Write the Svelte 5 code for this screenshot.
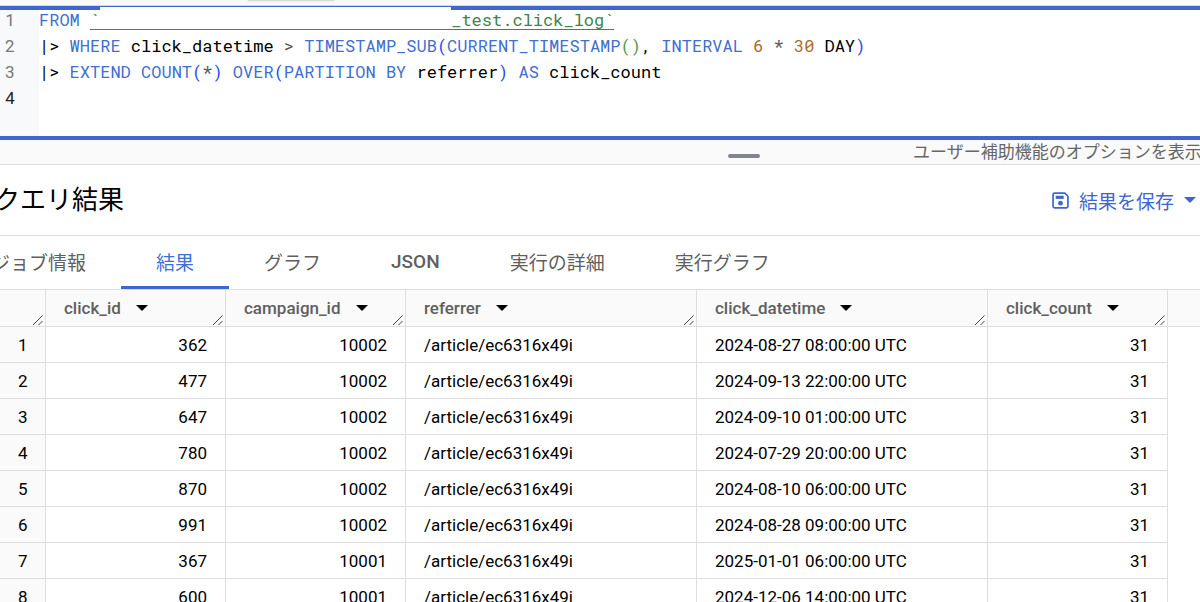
<script lang="ts">
	// Query editor with its results pane: SQL on top, tabs and the result grid below.
	type Token = { text: string; kind?: 'keyword' | 'paren' | 'inner' | 'number' | 'op' };

	const k = (text: string): Token => ({ text, kind: 'keyword' });
	const p = (text: string): Token => ({ text, kind: 'paren' });
	const n = (text: string): Token => ({ text, kind: 'number' });
	const o = (text: string): Token => ({ text, kind: 'op' });

	const filterLine: Token[] = [
		{ text: '|> ' },
		k('WHERE'),
		{ text: ' click_datetime ' },
		o('> '),
		k('TIMESTAMP_SUB'),
		p('('),
		k('CURRENT_TIMESTAMP'),
		{ text: '()', kind: 'inner' },
		{ text: ', ' },
		k('INTERVAL '),
		n('6'),
		o(' * '),
		n('30'),
		{ text: ' DAY' },
		p(')')
	];

	const extendLine: Token[] = [
		{ text: '|> ' },
		k('EXTEND COUNT'),
		p('('),
		o('*'),
		p(')'),
		k(' OVER'),
		p('('),
		k('PARTITION BY'),
		{ text: ' referrer' },
		p(')'),
		k(' AS'),
		{ text: ' click_count' }
	];

	const tabs = ['ジョブ情報', '結果', 'グラフ', 'JSON', '実行の詳細', '実行グラフ'];
	let active = $state('結果');

	const columns = ['click_id', 'campaign_id', 'referrer', 'click_datetime', 'click_count'];

	const referrer = '/article/ec6316x49i';
	const rows = [
		[362, 10002, referrer, '2024-08-27 08:00:00 UTC', 31],
		[477, 10002, referrer, '2024-09-13 22:00:00 UTC', 31],
		[647, 10002, referrer, '2024-09-10 01:00:00 UTC', 31],
		[780, 10002, referrer, '2024-07-29 20:00:00 UTC', 31],
		[870, 10002, referrer, '2024-08-10 06:00:00 UTC', 31],
		[991, 10002, referrer, '2024-08-28 09:00:00 UTC', 31],
		[367, 10001, referrer, '2025-01-01 06:00:00 UTC', 31],
		[600, 10001, referrer, '2024-12-06 14:00:00 UTC', 31]
	];
</script>

{#snippet grip()}
	<svg class="grip" viewBox="0 0 12 12" aria-hidden="true">
		<path d="M1 11 10.500 1.500M6.500 11 10.500 7" />
	</svg>
{/snippet}

{#snippet code(tokens: Token[])}
	{#each tokens as token}<span class={token.kind}>{token.text}</span>{/each}
{/snippet}

<div class="page">
	<div class="strip"><span class="strip-tab"></span></div>

	<section class="editor" aria-label="SQL">
		<div class="gutter">
			<div>1</div>
			<div>2</div>
			<div>3</div>
			<div class="current">4</div>
		</div>
		<div class="code">
			<div><span class="keyword">FROM</span> <span class="path">`<span class="masked"></span>_test.click_log`</span></div>
			<div>{@render code(filterLine)}</div>
			<div>{@render code(extendLine)}</div>
		</div>
	</section>

	<div class="splitter">
		<span class="handle"></span>
		<span class="hint">ユーザー補助機能のオプションを表示</span>
	</div>

	<header class="title-bar">
		<h1>クエリ結果</h1>
		<button class="save" type="button">
			<svg class="save-icon" viewBox="0 0 16 16" aria-hidden="true">
				<path d="M2.500 1H12L15 4V13.500Q15 15 13.500 15H2.500Q1 15 1 13.500V2.500Q1 1 2.500 1Z" fill="none" stroke="currentColor" stroke-width="1.600" />
				<path d="M3.500 3.500H11V6.500H3.500Z" fill="currentColor" />
				<circle cx="8" cy="10.500" r="2.300" fill="currentColor" />
			</svg>
			<span>結果を保存</span>
			<svg class="caret" viewBox="0 0 12 6" aria-hidden="true"><path d="M0 0H12L6 6Z" fill="currentColor" /></svg>
		</button>
	</header>

	<div class="tabs" role="tablist">
		{#each tabs as tab}
			<button
				type="button"
				role="tab"
				class:active={tab === active}
				class:latin={tab === 'JSON'}
				aria-selected={tab === active}
				onclick={() => (active = tab)}>{tab}</button
			>
		{/each}
	</div>

	<table>
		<colgroup>
			<col class="c-index" />
			<col class="c-narrow" />
			<col class="c-narrow" />
			<col class="c-wide" />
			<col class="c-wide" />
			<col class="c-narrow" />
			<col />
		</colgroup>
		<thead>
			<tr>
				<th>{@render grip()}</th>
				{#each columns as column}
					<th>
						<button class="sort" type="button">
							{column}
							<svg class="caret" viewBox="0 0 12 6" aria-hidden="true"><path d="M0 0H12L6 6Z" /></svg>
						</button>
						{@render grip()}
					</th>
				{/each}
				<th class="rest"></th>
			</tr>
		</thead>
		<tbody>
			{#each rows as row, i}
				<tr>
					<td class="index">{i + 1}</td>
					{#each row as cell}
						<td class:num={typeof cell === 'number'}>{cell}</td>
					{/each}
				</tr>
			{/each}
		</tbody>
	</table>
</div>

<style>
	:global(body) {
		background: #fff;
	}

	.page {
		height: 100vh;
		overflow: hidden;
		font-family: Roboto, 'Noto Sans CJK JP', sans-serif;
		font-size: 17px;
		color: #000;
	}

	button {
		padding: 0;
		border: 0;
		background: none;
		font: inherit;
		color: inherit;
		white-space: nowrap;
		cursor: pointer;
	}

	.strip {
		height: 5px;
		border-bottom: 1px solid #d5d8df;
		background: #fafafa;
	}

	.strip-tab {
		display: block;
		width: 86px;
		height: 1px;
		margin-left: 248px;
		background: #dadada;
		box-shadow: 0 0 2px #ccc;
	}

	.editor {
		display: flex;
		min-height: 126px;
		border-top: 4px solid #3f66cf;
		border-bottom: 4px solid #3f66cf;
		font-family: 'Roboto Mono', 'DejaVu Sans Mono', monospace;
		font-size: 17px;
		line-height: 26px;
	}

	.gutter {
		box-sizing: border-box;
		width: 39px;
		padding-left: 5px;
		background: #f8f9fb;
		color: #777;
	}

	.gutter,
	.code {
		line-height: 26px;
	}

	.gutter div,
	.code div {
		position: relative;
		top: -3px;
		height: 26px;
	}

	.gutter .current {
		color: #222;
	}

	.code div {
		white-space: pre;
	}

	.keyword {
		color: #3f6fd0;
	}

	.paren {
		color: #2a4cf0;
	}

	.inner {
		color: #4f9a4b;
	}

	.number {
		color: #b06a2c;
	}

	.op {
		color: #555;
	}

	.path {
		display: inline-block;
		height: 22px;
		border-bottom: 1px solid #3c8a3c;
		vertical-align: top;
		color: #3f8548;
	}

	.masked {
		display: inline-block;
		width: 351px;
		height: 20px;
		background: #fff;
		vertical-align: top;
	}

	.splitter {
		display: grid;
		grid-template-columns: 728px 32px 1fr;
		align-items: center;
		height: 24px;
		border-bottom: 1px solid #dedede;
		background: #fafafa;
		overflow: hidden;
	}

	.handle {
		grid-column: 2;
		height: 4px;
		margin-top: 8px;
		border-radius: 2px;
		background: #80868b;
	}

	.hint {
		margin-left: 153px;
		line-height: 22px;
		white-space: nowrap;
		color: #666;
	}

	.title-bar {
		display: flex;
		align-items: center;
		justify-content: space-between;
		height: 70px;
		padding-right: 4px;
		border-bottom: 1px solid #dedede;
	}

	h1 {
		margin: 0 0 0 -6px;
		font-size: 26px;
		font-weight: 400;
		line-height: 36px;
	}

	.save {
		display: flex;
		align-items: center;
		gap: 10px;
		font-size: 19px;
		color: #3f66cf;
	}

	.save-icon {
		width: 17px;
		height: 17px;
	}

	.caret {
		flex: none;
		width: 12px;
		height: 6px;
	}

	.tabs {
		display: flex;
		margin-left: -44px;
	}

	.tabs button {
		height: 53px;
		padding: 0 35px;
		border-bottom: 3px solid transparent;
		font-size: 19px;
		color: #5f5f5f;
	}

	.tabs .latin {
		font-weight: 500;
	}

	.tabs .active {
		border-color: #3f66cf;
		color: #3f6fd8;
	}

	table {
		width: 100%;
		table-layout: fixed;
		border-collapse: separate;
		border-spacing: 0;
		border-top: 1px solid #dedede;
	}

	.c-index {
		width: 46px;
	}

	.c-narrow {
		width: 180px;
	}

	.c-wide {
		width: 291px;
	}

	th,
	td {
		box-sizing: border-box;
		height: 36px;
		padding: 0 18px;
		border-right: 1px solid #dedede;
		border-bottom: 1px solid #dedede;
		line-height: 34px;
		text-align: left;
		white-space: nowrap;
	}

	th {
		position: relative;
		height: 37px;
		background: #fafafa;
		font-weight: 500;
		color: #5f5f5f;
	}

	.rest {
		border-right: 0;
	}

	.num {
		text-align: right;
	}

	.index {
		background: #fafafa;
		text-align: right;
	}

	.sort {
		display: flex;
		align-items: center;
		gap: 15px;
	}

	.sort .caret {
		fill: #000;
	}

	.grip {
		position: absolute;
		right: 1px;
		bottom: 0;
		width: 12px;
		height: 12px;
		fill: none;
		stroke: #444;
	}
</style>
